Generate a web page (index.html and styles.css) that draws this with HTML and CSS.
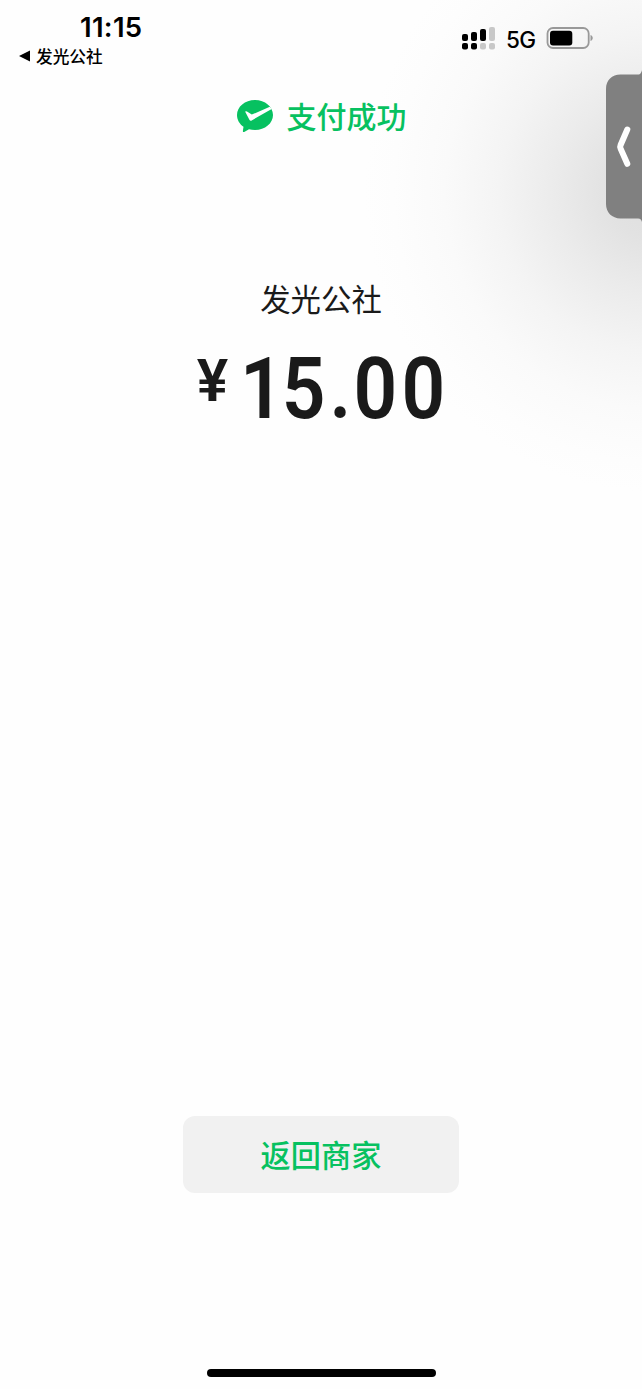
FILE: index.html
```html
<!DOCTYPE html>
<html lang="zh-CN">
<head>
	<meta charset="utf-8">
	<title>支付成功</title>
	<link rel="stylesheet" href="styles.css">
</head>
<body>
	<div class="page">
		<header class="status">
			<div class="status-left">
				<div class="time">11:15</div>
				<div class="back">
					<svg width="12" height="12" viewBox="0 0 12 12"><path d="M0 6 11 .6v10.800z"/></svg>
					<span>发光公社</span>
				</div>
			</div>
			<div class="status-right">
				<svg width="34" height="24" viewBox="0 0 34 24">
					<rect x="0" y="7" width="6" height="7" rx="2"/>
					<rect x="9" y="5" width="6" height="9" rx="2"/>
					<rect x="18" y="2" width="6" height="12" rx="2"/>
					<rect class="off" x="27" y="0" width="6" height="14" rx="2"/>
					<rect x="0" y="16" width="6" height="6.500" rx="2"/>
					<rect x="9" y="16" width="6" height="6.500" rx="2"/>
					<rect class="off" x="18" y="16" width="6" height="6.500" rx="2"/>
					<rect class="off" x="27" y="16" width="6" height="6.500" rx="2"/>
				</svg>
				<span class="network">5G</span>
				<svg width="48" height="24" viewBox="0 0 48 24">
					<rect class="case" x="1.500" y="1" width="41.200" height="20" rx="5.500"/>
					<rect x="4" y="3.700" width="22.300" height="14.800" rx="3"/>
					<path class="tip" d="M44.500 8c3 1.300 3 4.700 0 6z"/>
				</svg>
			</div>
		</header>
		<div class="result">
			<svg width="36" height="33" viewBox="0 0 36 33">
				<path class="bubble" d="M18 0C8 0 0 6.700 0 15c0 4.800 2.500 9 6.500 11.800L5.900 30.800c-.2 1 .5 1.500 1.300 1.100L12 29.200c1.900.5 3.900.8 6 .8 10 0 18-6.700 18-15S28 0 18 0z"/>
				<path class="check" d="M8.200 11.700c.8-.8 1.500-.5 2.200 0l4.400 2.900L32.800 6.800l1.900 2.200L14.700 20.400c-.9.500-1.800.3-2.300-.6z"/>
			</svg>
			<span>支付成功</span>
		</div>
		<div class="merchant">发光公社</div>
		<div class="amount"><span class="currency">¥</span><span class="digits"><span class="one">1</span>5<span class="dot">.</span>00</span></div>
		<button class="return" type="button">返回商家</button>
		<div class="home"></div>
		<svg class="tab" width="36" height="152" viewBox="0 0 36 152">
			<path class="panel" d="M36 0v152c-.4-2-1.500-3.600-4-3.600H14.500C6 148.400 0 142.500 0 134V19C0 10.500 6 4.600 14.500 4.600H32C34.500 4.600 35.600 2 36 0z"/>
			<path class="arrow" d="M21.300 59.500 14.600 75q-.8 1.800 0 3.600l6.700 15.200"/>
		</svg>
	</div>
</body>
</html>
```
FILE: styles.css
```css
body
{
	margin: 0;
	font-family: "Noto Sans CJK SC", sans-serif;
}

svg
{
	display: block;
	flex: none;
}

.page
{
	position: relative;
	display: flex;
	flex-direction: column;
	align-items: center;
	box-sizing: border-box;
	width: 642px;
	height: 1389px;
	padding-bottom: 12px;
	overflow: hidden;
	background: radial-gradient(ellipse 285px 300px at 650px 192px, #dedede 0%, #e2e2e2 15%, #ebebeb 33%, #f4f4f4 53%, #fafafa 72%, #fdfdfd 90%, #fefefe 100%);
}

.status
{
	display: flex;
	justify-content: space-between;
	box-sizing: border-box;
	width: 100%;
	height: 76px;
	padding: 11px 48px 0 19px;
	color: #000;
}

.time
{
	margin-left: 61px;
	font: 600 27.500px/32px Inter, sans-serif;
	letter-spacing: 0.3px;
}

.back
{
	display: flex;
	align-items: center;
	gap: 5px;
	height: 26px;
	font-size: 16.700px;
	font-weight: 500;
	line-height: 26px;
}

.status-right
{
	display: flex;
	align-items: center;
	height: 24px;
	margin-top: 16px;
}

.network
{
	width: 40px;
	margin-left: 10px;
	font: 450 22.500px/26px Inter, sans-serif;
	letter-spacing: -0.700px;
	padding-top: 2px;
}

.off
{
	fill: #c8c8c8;
}

.case
{
	fill: none;
	stroke: #999;
	stroke-width: 1.800;
}

.tip
{
	fill: #999;
}

.result
{
	display: flex;
	align-items: center;
	gap: 14px;
	height: 44px;
	margin-top: 18px;
	margin-left: 1px;
	color: #07c160;
	font-size: 30px;
	font-weight: 500;
	line-height: 44px;
}

.result span
{
	padding-bottom: 3px;
}

.bubble
{
	fill: #07c160;
}

.check
{
	fill: #fff;
}

.merchant
{
	margin-top: 137px;
	color: #1a1a1a;
	font-size: 30.400px;
	line-height: 46px;
}

.amount
{
	display: flex;
	align-items: flex-start;
	margin-top: 18px;
	margin-left: 14px;
	color: #1a1a1a;
	font: 600 85px/100px Roboto, sans-serif;
}

.currency
{
	margin-right: 12px;
	font-size: 59px;
	line-height: 83px;
}

/* narrow figures, spaced out */
.digits
{
	width: 219px;
	letter-spacing: 4.700px;
	white-space: nowrap;
	transform: scaleX(0.9);
	transform-origin: left;
}

.one
{
	letter-spacing: -2.300px;
}

.dot
{
	letter-spacing: 2.500px;
}

.return
{
	width: 276px;
	height: 77px;
	margin-top: auto;
	padding: 0;
	border: 0;
	border-radius: 12px;
	background: #f1f1f1;
	color: #07c160;
	font: 500 30.200px/77px "Noto Sans CJK SC", sans-serif;
}

.home
{
	width: 229px;
	height: 8px;
	margin-top: 176px;
	border-radius: 4px;
	background: #000;
}

.tab
{
	position: absolute;
	top: 70px;
	right: 0;
}

.panel
{
	fill: #808080;
}

.arrow
{
	fill: none;
	stroke: #fff;
	stroke-width: 6;
	stroke-linecap: round;
	stroke-linejoin: round;
}
```
